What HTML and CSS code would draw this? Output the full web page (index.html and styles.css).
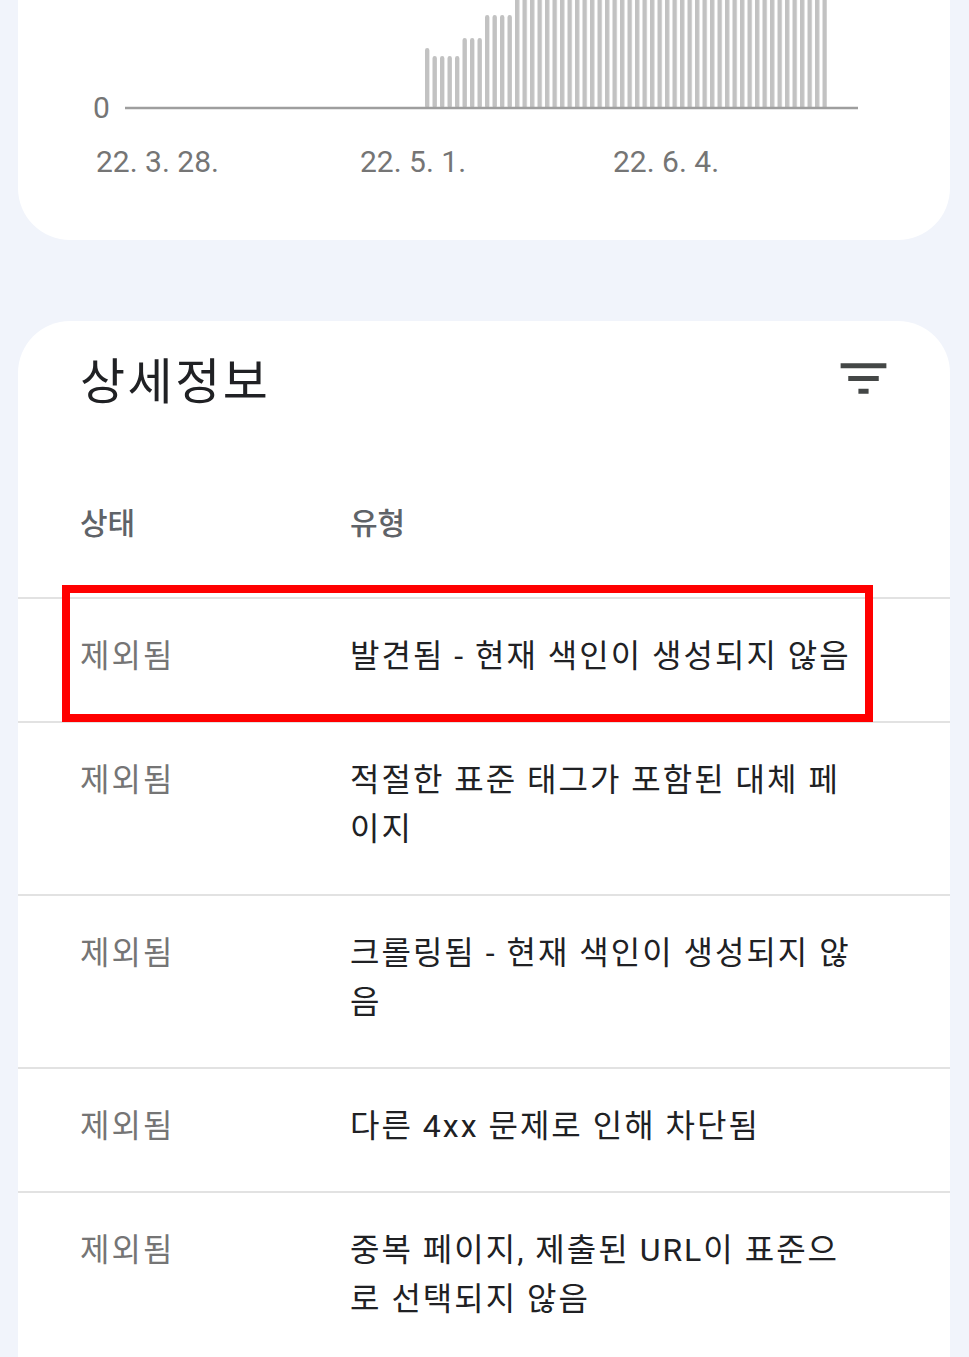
FILE: index.html
```html
<!DOCTYPE html>
<html lang="ko">
<head>
<meta charset="utf-8">
<title>상세정보</title>
<link rel="stylesheet" href="styles.css">
</head>
<body>
<div class="page">
  <section class="card chart-card">
    <svg class="chart" viewBox="18 0 932 240" width="932" height="240" xmlns="http://www.w3.org/2000/svg">
      <defs>
        <pattern id="bars" patternUnits="userSpaceOnUse" x="425" y="0" width="7.5" height="240">
          <rect x="0" y="0" width="4.4" height="240" fill="#c2c2c2"/>
        </pattern>
      </defs>
      <path class="bar" d="M427.2 50.2V106 M434.7 58.2V106 M442.2 58.2V106 M449.7 58.2V106 M457.2 58.2V106 M464.7 40.2V106 M472.2 40.2V106 M479.7 40.2V106 M487.2 17.2V106 M494.7 17.2V106 M502.2 17.2V106 M509.7 17.2V106"/>
      <rect x="515" y="-10" width="312" height="117" fill="url(#bars)"/>
      <path class="axis" d="M125 108H858"/>
      <text class="ax" x="93" y="118">0</text>
      <text class="ax" x="96" y="172">22. 3. 28.</text>
      <text class="ax" x="360" y="172">22. 5. 1.</text>
      <text class="ax" x="613" y="172">22. 6. 4.</text>
    </svg>
  </section>

  <section class="card details">
    <div class="details-head">
      <h2 class="title">상세정보</h2>
      <svg class="filter" viewBox="0 0 24 24" width="61" height="61" xmlns="http://www.w3.org/2000/svg">
        <path d="M10 18h4v-2h-4v2zM3 6v2h18V6H3zm3 7h12v-2H6v2z" fill="#444746"/>
      </svg>
    </div>
    <div class="table">
      <div class="row head"><div class="c1">상태</div><div class="c2">유형</div></div>
      <div class="row"><div class="c1">제외됨</div><div class="c2">발견됨 - 현재 색인이 생성되지 않음</div></div>
      <div class="row"><div class="c1">제외됨</div><div class="c2">적절한 표준 태그가 포함된 대체 페이지</div></div>
      <div class="row"><div class="c1">제외됨</div><div class="c2">크롤링됨 - 현재 색인이 생성되지 않음</div></div>
      <div class="row"><div class="c1">제외됨</div><div class="c2">다른 4xx 문제로 인해 차단됨</div></div>
      <div class="row"><div class="c1">제외됨</div><div class="c2">중복 페이지, 제출된 URL이 표준으로 선택되지 않음</div></div>
    </div>
    <div class="highlight"></div>
  </section>
</div>
</body>
</html>
```

FILE: styles.css
```css
html, body {
  margin: 0;
  padding: 0;
}

body {
  background: #f1f4fb;
  font-family: "Roboto", "Noto Sans CJK KR", sans-serif;
  overflow: hidden;
}

.page {
  display: flex;
  flex-direction: column;
  gap: 81px;
  padding: 0 19px 0 18px;
}

.card {
  background: #ffffff;
}

.chart-card {
  height: 240px;
  border-radius: 0 0 52px 52px;
  overflow: hidden;
}

.chart {
  display: block;
}

.chart .bar {
  fill: none;
  stroke: #c2c2c2;
  stroke-width: 4.4;
  stroke-linecap: round;
}

.chart .axis {
  fill: none;
  stroke: #9e9e9e;
  stroke-width: 2.5;
}

.chart .ax {
  font-family: "Roboto", sans-serif;
  font-size: 30px;
  fill: #757575;
}

.details {
  position: relative;
  border-radius: 52px 52px 0 0;
  padding: 32px 0 0;
}

.details-head {
  display: flex;
  justify-content: space-between;
  align-items: flex-start;
  padding: 0 56px 0 62px;
}

.title {
  margin: 0;
  font-size: 49px;
  letter-spacing: 2.5px;
  line-height: 60px;
  font-weight: 400;
  color: #202124;
}

.filter {
  display: block;
  margin-top: -5px;
}

.table {
  margin-top: 86px;
}

.row {
  display: grid;
  grid-template-columns: 270px 1fr;
  padding: 33px 87px 40px 62px;
  border-top: 2px solid #e2e2e2;
  font-size: 32px;
  letter-spacing: 2px;
  line-height: 49px;
}

.row.head {
  border-top: none;
  padding: 0 87px 48px 62px;
  font-size: 30px;
  letter-spacing: 0;
  line-height: 50px;
  font-weight: 500;
}

.row.head .c1,
.row.head .c2 {
  color: #5f6368;
}

.c1 {
  color: #757575;
}

.c2 {
  color: #202124;
}

.highlight {
  position: absolute;
  left: 44px;
  top: 264px;
  width: 811px;
  height: 137px;
  box-sizing: border-box;
  border: 8px solid #ff0000;
  pointer-events: none;
}
```
